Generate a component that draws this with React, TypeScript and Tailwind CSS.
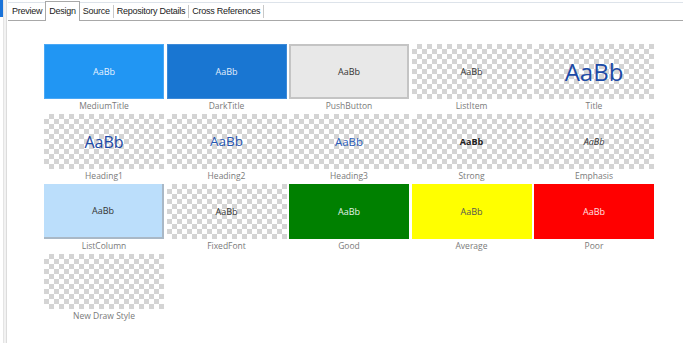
const tabs = ["Preview", "Design", "Source", "Repository Details", "Cross References"];

type Tile = {
  label: string;
  box: string;
  text?: string;
};

const checker =
  "bg-[repeating-conic-gradient(#d4d4d4_0_25%,#ffffff_0_50%)] bg-[length:10px_10px]";

const tiles: Tile[] = [
  { label: "MediumTitle", box: "bg-[#2196f3] border border-[#4aa8f5]", text: "text-[9px] text-[#e8f3ff]" },
  { label: "DarkTitle", box: "bg-[#1976d2] border border-[#3d8ad8]", text: "text-[9px] text-[#e0ecfa]" },
  { label: "PushButton", box: "bg-[#e8e8e8] border-2 border-[#c4c4c4]", text: "text-[9px] text-[#333]" },
  { label: "ListItem", box: checker, text: "text-[9px] text-[#333]" },
  { label: "Title", box: checker, text: "text-[24px] text-[#1c4aa6]" },
  { label: "Heading1", box: checker, text: "text-[16px] text-[#1c4aa6]" },
  { label: "Heading2", box: checker, text: "text-[13.5px] text-[#2555b0]" },
  { label: "Heading3", box: checker, text: "text-[11.5px] text-[#2a5cb8]" },
  { label: "Strong", box: checker, text: "text-[9px] font-bold text-[#222]" },
  { label: "Emphasis", box: checker, text: "text-[9px] italic text-[#333]" },
  { label: "ListColumn", box: "bg-[#bbdefb] border-r-2 border-b-2 border-[#a9b8c6]", text: "text-[9px] text-[#333]" },
  { label: "FixedFont", box: checker, text: "text-[9px] text-[#333]" },
  { label: "Good", box: "bg-[#008000]", text: "text-[9px] text-[#e6f2e6]" },
  { label: "Average", box: "bg-[#ffff00]", text: "text-[9px] text-[#555]" },
  { label: "Poor", box: "bg-[#ff0000]", text: "text-[9px] text-[#ffe0e0]" },
  { label: "New Draw Style", box: checker },
];

export default function App() {
  return (
    <div className="flex h-[343px] w-[683px] overflow-hidden bg-white font-['Open_Sans','Noto_Sans',sans-serif]">
      {/* left edge */}
      <div className="flex w-[8px] shrink-0">
        <div className="flex w-[3px] flex-col">
          <div className="h-[17px] bg-[#1a73d9]" />
        </div>
        <div className="w-[1px] bg-[#e4e4e4]" />
        <div className="w-[2px] bg-[#f2f2f2]" />
        <div className="w-[1px] bg-[#dcdcdc]" />
      </div>

      <div className="flex min-w-0 flex-1 flex-col">
        {/* tab strip */}
        <div className="mt-[2px] flex h-[19px] items-end border-t border-b border-[#dde3ea] border-b-[#a8a8a8] pl-[1px] font-['Liberation_Sans',Arial,sans-serif] text-[9px] tracking-[-0.25px] text-[#222]">
          {tabs.map((t, i) => {
            const sel = t === "Design";
            return (
              <div key={t} className="flex h-full items-end">
                <div
                  className={
                    sel
                      ? "relative -mb-[1px] -mt-[2px] flex h-[20px] items-center border border-b-0 border-[#a8a8a8] bg-white px-[3px]"
                      : "flex h-full items-center px-[3px]"
                  }
                >
                  {t}
                </div>
                {!sel && tabs[i + 1] !== "Design" && (
                  <div className="mb-[2px] h-[13px] w-[1px] bg-[#c8c8c8]" />
                )}
              </div>
            );
          })}
        </div>

        {/* style grid */}
        <div className="grid grid-cols-[120px_120px_120px_120px_120px] gap-x-[2.5px] pl-[36px] pt-[23px]">
          {tiles.map((t) => (
            <div key={t.label} className="flex flex-col">
              <div className={`flex h-[55px] items-center justify-center ${t.box}`}>
                {t.text && <span className={`leading-none ${t.text}`}>AaBb</span>}
              </div>
              <div className="flex h-[15px] items-center justify-center text-[8.5px] text-[#7a7a7a]">
                {t.label}
              </div>
            </div>
          ))}
        </div>
      </div>
    </div>
  );
}
